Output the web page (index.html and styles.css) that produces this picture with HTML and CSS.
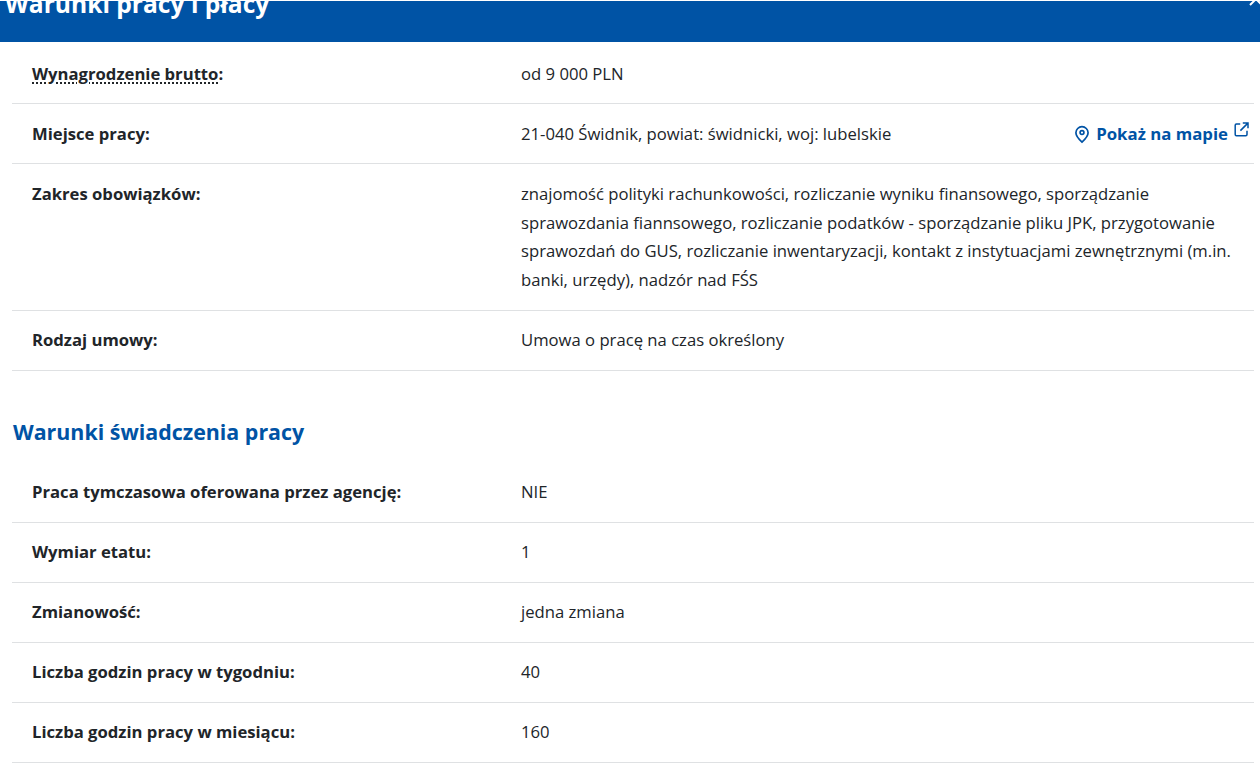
FILE: index.html
```html
<!DOCTYPE html>
<html lang="pl">
<head>
<meta charset="utf-8">
<title>Warunki pracy i płacy</title>
<link rel="stylesheet" href="styles.css">
</head>
<body>
<header class="band">
  <h2 class="band-title">Warunki pracy i płacy</h2>
  <svg class="band-chevron" width="16" height="16" viewBox="0 0 16 16" fill="none" stroke="#fff" stroke-width="2"><path d="M2 11 8 5l6 6"/></svg>
</header>
<main class="content">
  <dl class="list">
    <div class="row"><dt><span class="hint">Wynagrodzenie brutto</span>:</dt><dd>od 9 000 PLN</dd></div>
    <div class="row">
      <dt>Miejsce pracy:</dt>
      <dd class="with-link">
        <span>21-040 Świdnik, powiat: świdnicki, woj: lubelskie</span>
        <a class="map-link" href="#">
          <svg class="pin" width="16" height="19" viewBox="0 0 16 19" fill="none" stroke="#0053a5" stroke-width="1.7"><path d="M8 17.2C4.8 14.2 1.9 11.2 1.9 7.8a6.1 6.1 0 0 1 12.2 0c0 3.4-2.9 6.4-6.1 9.4Z"/><circle cx="8" cy="7.6" r="1.9"/></svg>
          <span>Pokaż na mapie</span>
          <svg class="ext" width="15" height="15" viewBox="0 0 15 15" fill="none" stroke="#0053a5" stroke-width="1.5"><path d="M6.2 2H2.4a1.2 1.2 0 0 0-1.2 1.2v9.4a1.2 1.2 0 0 0 1.2 1.2h9.4a1.2 1.2 0 0 0 1.2-1.2V8.8"/><path d="M6.4 8.6 13.4 1.6M8.8 1h5.2v5.2"/></svg>
        </a>
      </dd>
    </div>
    <div class="row"><dt>Zakres obowiązków:</dt><dd>znajomość polityki rachunkowości, rozliczanie wyniku finansowego, sporządzanie sprawozdania fiannsowego, rozliczanie podatków - sporządzanie pliku JPK, przygotowanie sprawozdań do GUS, rozliczanie inwentaryzacji, kontakt z instytuacjami zewnętrznymi (m.in. banki, urzędy), nadzór nad FŚS</dd></div>
    <div class="row"><dt>Rodzaj umowy:</dt><dd>Umowa o pracę na czas określony</dd></div>
  </dl>
  <h3 class="section-title">Warunki świadczenia pracy</h3>
  <dl class="list">
    <div class="row"><dt>Praca tymczasowa oferowana przez agencję:</dt><dd>NIE</dd></div>
    <div class="row"><dt>Wymiar etatu:</dt><dd>1</dd></div>
    <div class="row"><dt>Zmianowość:</dt><dd>jedna zmiana</dd></div>
    <div class="row"><dt>Liczba godzin pracy w tygodniu:</dt><dd>40</dd></div>
    <div class="row"><dt>Liczba godzin pracy w miesiącu:</dt><dd>160</dd></div>
  </dl>
</main>
</body>
</html>
```
FILE: styles.css
```css
html, body {
  margin: 0;
  height: 764px;
  overflow: hidden;
  background: #fff;
}
body {
  font-family: "Open Sans", sans-serif;
  font-size: 16.66px;
  line-height: 28.9px;
  color: #212529;
  padding-top: 1px;
  box-sizing: border-box;
}
.band {
  background: #0053a5;
  height: 41px;
  display: flex;
  justify-content: space-between;
  overflow: hidden;
  padding: 0 0 0 5px;
  box-sizing: border-box;
}
.band-title {
  margin: -13px 0 0;
  font-size: 24.6px;
  line-height: 32px;
  font-weight: 700;
  color: #fff;
}
.band-chevron {
  margin: -7px -4px 0 0;
  flex: none;
}
.content {
  padding: 2.3px 6px 0 12px;
}
.list {
  margin: 0;
}
.row {
  display: grid;
  grid-template-columns: 489px 1fr;
  padding: 15.4px 5px 14.7px 20px;
  border-bottom: 1px solid #dfe1e3;
}
dt {
  font-weight: 700;
}
dd {
  margin: 0;
}
.hint {
  text-decoration: underline dotted #212529 2px;
  text-underline-offset: 3px;
}
.with-link {
  display: flex;
  justify-content: space-between;
}
.map-link {
  display: flex;
  align-items: center;
  gap: 6px;
  color: #0053a5;
  font-size: 16.8px;
  font-weight: 700;
  text-decoration: none;
}
.ext {
  align-self: flex-start;
  margin-top: 2px;
}
.section-title {
  margin: 45px 0 15px 1px;
  font-size: 21.4px;
  line-height: 32px;
  font-weight: 700;
  color: #0053a5;
}
```
